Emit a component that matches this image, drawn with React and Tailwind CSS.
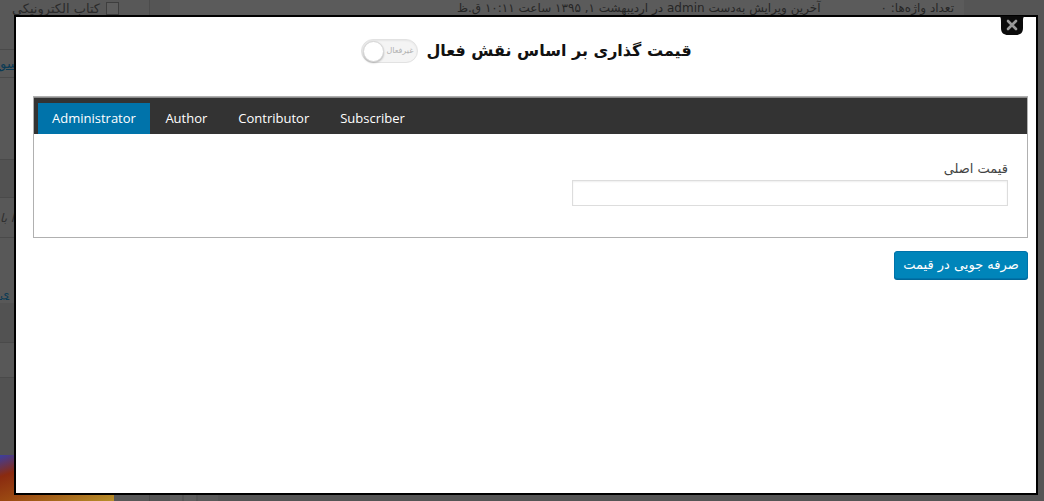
import React from "react";

const fa = { fontFamily: '"DejaVu Sans", Tahoma, sans-serif' };
const lat = { fontFamily: '"Open Sans", "Segoe UI", sans-serif' };

function CloseTab() {
  return (
    <svg width="30" height="20" viewBox="0 0 30 20" className="block">
      <path d="M0 0 H30 C26 0 26 2 26 6 V12 C26 17 23 19 19 19 H11 C7 19 4 17 4 12 V6 C4 2 4 0 0 0 Z" fill="#0b0b0b" />
      <path d="M11 5 L19 13 M19 5 L11 13" stroke="#9a9a9a" strokeWidth="2.6" strokeLinecap="round" />
    </svg>
  );
}

export default function App() {
  return (
    <div className="relative w-[1044px] h-[501px] overflow-hidden bg-[#555555]">
      {/* dimmed page underneath */}
      <div className="flex h-full">
        <div className="w-[150px] flex flex-col bg-[#585858] border-r border-[#4c4c4c]">
          <div dir="rtl" className="h-[17px] flex items-center gap-[6px] pr-[30px] text-[13px] text-[#2a2a2a]" style={fa}>
            <span className="w-[13px] h-[13px] border border-[#3e3e3e] bg-[#5e5e5e]" />
            <span className="leading-none">کتاب الکترونیکی</span>
          </div>
          <div className="h-[33px] border-b border-[#4a4a4a]" />
          <div className="h-[28px] border-b border-[#4a4a4a] flex items-center text-[13px] text-[#0b3b55] underline" style={fa}>سو</div>
          <div className="h-[82px] border-b border-[#4a4a4a]" />
          <div className="h-[38px] bg-[#525252] border-b border-[#4a4a4a]" />
          <div className="h-[40px] border-b border-[#4a4a4a] flex items-center text-[12px] text-[#2e2e2e] italic" style={fa}>ا با</div>
          <div className="h-[65px] flex items-end text-[12px] text-[#0b3b55] underline" style={fa}>ی</div>
          <div className="h-[40px] bg-[#525252] border-b border-[#4a4a4a]" />
          <div className="h-[35px] border-b border-[#4a4a4a]" />
          <div className="h-[77px] bg-[#525252]" />
          <div className="flex-1 mr-[35px] bg-[linear-gradient(160deg,#3b3fa0_0%,#8a2a10_25%,#9b4a12_55%,#b8902a_100%)]" />
        </div>
        <div className="flex-1 flex flex-col">
          <div dir="rtl" className="h-[16px] flex items-center text-[12px] text-[#262626] bg-[#5b5b5b] mx-[20px] mr-[80px] px-[10px] gap-[60px]" style={fa}>
            <span className="leading-none">تعداد واژه‌ها: ۰</span>
            <span className="leading-none">آخرین ویرایش به‌دست admin در اردیبهشت ۱, ۱۳۹۵ ساعت ۱۰:۱۱ ق.ظ</span>
          </div>
          <div className="flex-1" />
          <div className="h-[8px] flex gap-[2px] pl-[20px]">
            <div className="w-[12px] bg-[#5e5e5e]" />
            <div className="w-[12px] bg-[#5e5e5e]" />
            <div className="w-[20px] bg-[#5a5a5a]" />
          </div>
        </div>
      </div>

      {/* modal */}
      <div className="absolute left-[14px] top-[15px] w-[1024px] h-[480px] bg-white border-2 border-black">
        <div className="absolute right-[9px] top-[-1px]">
          <CloseTab />
        </div>
        <div className="pl-[17px] pr-[8px]">
          <div dir="rtl" className="h-[79px] pt-[22px] flex justify-center items-start gap-[8px] pr-[8px]">
            <h2 className="text-[16px] leading-[24px] font-bold text-[#111]" style={fa}>قیمت گذاری بر اساس نقش فعال</h2>
            <div dir="ltr" className="w-[57px] h-[24px] rounded-full border border-[#e2e2e2] bg-[#f4f4f4] flex items-center pl-[1px] shadow-[inset_0_1px_2px_rgba(0,0,0,0.06)]">
              <span className="w-[21px] h-[21px] rounded-full bg-white border border-[#d6d6d6] shadow-[0_1px_2px_rgba(0,0,0,0.25)]" />
              <span className="ml-[2px] text-[8px] text-[#b0b0b0]" style={fa}>غیرفعال</span>
            </div>
          </div>

          <div className="border border-[#b0b0b0]">
            <div className="h-[37px] bg-[#333333] border-t border-[#8a8a8a] flex items-end pl-[4px] text-[13px]" style={lat}>
              <div className="h-[31px] px-[14px] flex items-center bg-[#0073aa] text-white">Administrator</div>
              <div className="h-[31px] px-[15.5px] flex items-center text-white">Author</div>
              <div className="h-[31px] px-[15.5px] flex items-center text-white">Contributor</div>
              <div className="h-[31px] px-[15.5px] flex items-center text-white">Subscriber</div>
            </div>
            <div dir="rtl" className="h-[103px] pt-[26px] pr-[19px] flex flex-col items-start">
              <label className="text-[13px] leading-[18px] text-[#444] mb-[2px]" style={fa}>قیمت اصلی</label>
              <input className="w-[436px] h-[26px] border border-[#dddddd] shadow-[inset_0_1px_2px_rgba(0,0,0,0.07)] outline-none" />
            </div>
          </div>

          <div dir="rtl" className="flex pt-[13px]">
            <button className="h-[28px] w-[134px] rounded-[3px] bg-[#0085ba] border border-[#0073aa] shadow-[0_1px_0_#006799] text-white text-[13px]" style={fa}>
              صرفه جویی در قیمت
            </button>
          </div>
        </div>
      </div>
    </div>
  );
}
